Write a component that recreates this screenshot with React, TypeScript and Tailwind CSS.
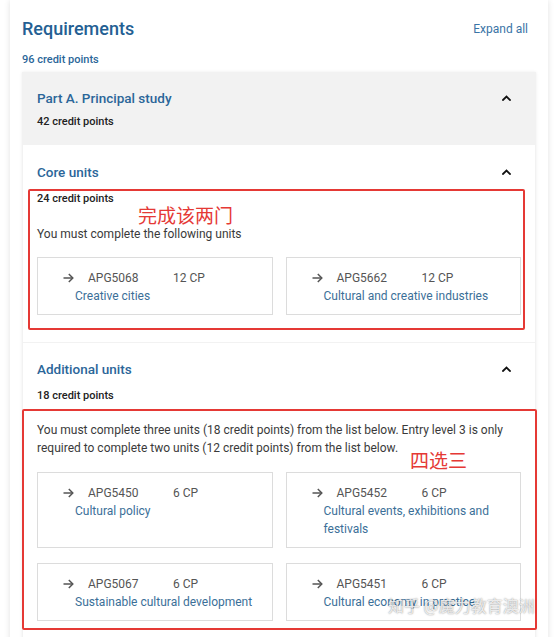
import React from 'react';

type Unit = { code: string; cp: string; title: string };

const coreUnits: Unit[] = [
  { code: 'APG5068', cp: '12 CP', title: 'Creative cities' },
  { code: 'APG5662', cp: '12 CP', title: 'Cultural and creative industries' },
];

const additionalUnits: Unit[] = [
  { code: 'APG5450', cp: '6 CP', title: 'Cultural policy' },
  { code: 'APG5452', cp: '6 CP', title: 'Cultural events, exhibitions and festivals' },
  { code: 'APG5067', cp: '6 CP', title: 'Sustainable cultural development' },
  { code: 'APG5451', cp: '6 CP', title: 'Cultural economy in practice' },
];

const Chevron = () => (
  <svg width="9" height="6" viewBox="0 0 9 6" fill="none" className="shrink-0">
    <polyline points="1,5 4.5,1.5 8,5" stroke="#111" strokeWidth="1.8" strokeLinecap="square" />
  </svg>
);

const Arrow = () => (
  <svg width="11" height="10" viewBox="0 0 11 10" fill="none" className="shrink-0">
    <line x1="0.5" y1="5" x2="10" y2="5" stroke="#555" strokeWidth="1.5" />
    <polyline points="5.8,1 9.8,5 5.8,9" stroke="#555" strokeWidth="1.5" fill="none" />
  </svg>
);

const UnitCard = ({ unit }: { unit: Unit }) => (
  <div className="border border-[#dcdcdc] bg-white pl-[25px] pr-[14px] pt-[11px] pb-[9px]">
    <div className="flex items-center h-[18px] text-[12px] text-[#555]">
      <Arrow />
      <span className="ml-[14px] w-[85px]">{unit.code}</span>
      <span>{unit.cp}</span>
    </div>
    <div className="ml-[12px] text-[12px] leading-[18px] text-[#3b6f98]">{unit.title}</div>
  </div>
);

const Annotation = ({ text, className }: { text: string; className: string }) => (
  <span
    className={`absolute text-[19px] leading-none text-[#e53935] font-['Noto_Sans_CJK_SC',sans-serif] ${className}`}
  >
    {text}
  </span>
);

export default function App() {
  return (
    <div className="h-[637px] overflow-hidden bg-white font-['Roboto','Liberation_Sans',sans-serif]">
      <div className="relative ml-[10px] mr-[6px] bg-white px-[12px] pt-[15px] pb-10 shadow-[0_0_6px_rgba(0,0,0,0.12)]">
        {/* Header */}
        <div className="flex items-center justify-between">
          <h2 className="text-[18px] leading-[28px] font-medium text-[#245f93]">Requirements</h2>
          <span className="mr-[8px] text-[12px] text-[#3a74a6]">Expand all</span>
        </div>
        <div className="mt-[9px] mb-[4px] text-[11px] leading-[16px] font-medium text-[#2b6699]">96 credit points</div>

        {/* Part A */}
        <div className="bg-[#f2f2f2] shadow-[0_0_3px_rgba(0,0,0,0.08)]">
          <div className="pl-[15px] pr-[25px] pt-[16px] pb-[15px]">
            <div className="flex items-center justify-between">
              <h3 className="text-[13.5px] leading-[20px] font-medium text-[#2b6699]">Part A. Principal study</h3>
              <Chevron />
            </div>
            <div className="mt-[6px] text-[11px] leading-[16px] font-medium text-[#222]">42 credit points</div>
          </div>

          <div className="flex flex-col gap-px px-px">
            {/* Core units */}
            <div className="bg-white px-[14px] pt-[17px] pb-[12px]">
              <div className="flex items-center justify-between pr-[10px]">
                <h4 className="text-[13.5px] leading-[20px] font-medium text-[#2b6699]">Core units</h4>
                <Chevron />
              </div>
              <div className="relative mt-[7px] -ml-[9px] -mr-[4px] rounded-[2px] border-2 border-[#e53935] pl-[7px] pr-[2px] pb-[13px]">
                <Annotation text="完成该两门" className="left-[108px] top-[14px]" />
                <div className="text-[11px] leading-[16px] font-medium text-[#222]">24 credit points</div>
                <p className="mt-[18px] text-[12px] leading-[18px] text-[#3a3a3a]">You must complete the following units</p>
                <div className="mt-[14px] grid grid-cols-2 gap-x-[13px]">
                  {coreUnits.map((u) => (
                    <UnitCard key={u.code} unit={u} />
                  ))}
                </div>
              </div>
            </div>

            {/* Additional units */}
            <div className="bg-white px-[14px] pt-[16px] pb-[12px]">
              <div className="flex items-center justify-between pr-[10px]">
                <h4 className="text-[13.5px] leading-[20px] font-medium text-[#2b6699]">Additional units</h4>
                <Chevron />
              </div>
              <div className="mt-[9px] text-[11px] leading-[16px] font-medium text-[#222]">18 credit points</div>
              <div className="relative mt-[5px] -ml-[15px] -mr-[16px] rounded-[2px] border-2 border-[#e53935] pl-[13px] pr-[14px] pt-[10px] pb-[7px]">
                <Annotation text="四选三" className="left-[386px] top-[39px]" />
                <p className="text-[12px] leading-[18px] text-[#3a3a3a]">
                  You must complete three units (18 credit points) from the list below. Entry level 3 is only required to complete two units (12 credit points) from the list below.
                </p>
                <div className="mt-[15px] grid grid-cols-2 gap-x-[13px] gap-y-[15px]">
                  {additionalUnits.map((u) => (
                    <UnitCard key={u.code} unit={u} />
                  ))}
                </div>
              </div>
            </div>
          </div>
        </div>

        {/* watermark */}
        <span className="absolute left-[378px] top-[595px] text-[16px] leading-[20px] text-white/80 font-['Noto_Sans_CJK_SC',sans-serif] [text-shadow:0_0_1.5px_rgba(0,0,0,0.55)]">
          知乎 @魔力教育澳洲
        </span>
      </div>
    </div>
  );
}
